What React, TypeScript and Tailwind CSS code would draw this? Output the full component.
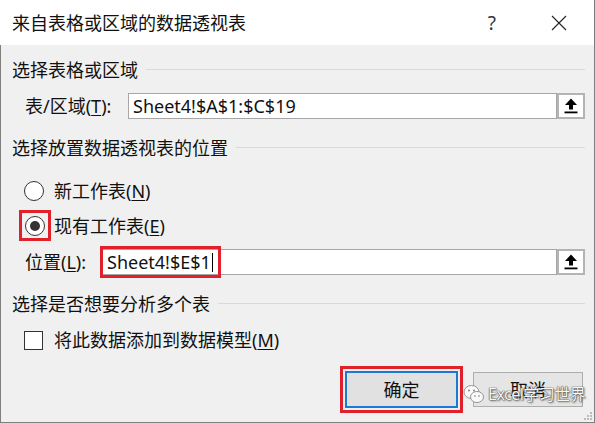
import React from "react";

const font = { fontFamily: '"Noto Sans", "Noto Sans CJK SC", sans-serif' };

function UploadBtn() {
  return (
    <div className="w-[28px] h-[26px] border-2 border-[#b4b4b4] bg-white flex items-center justify-center shrink-0">
      <svg width="16" height="18" viewBox="0 0 16 18">
        <path d="M8 1.5 L14 8 L10 8 L10 12.5 L6 12.5 L6 8 L2 8 Z" fill="#000" />
        <rect x="1.5" y="14.5" width="13" height="1.8" fill="#000" />
      </svg>
    </div>
  );
}

function SectionHeader({ text }: { text: string }) {
  return (
    <div className="flex items-center h-[24px]">
      <span className="text-[18px] leading-[24px] text-[#111] whitespace-nowrap">{text}</span>
      <div className="flex-1 h-px bg-[#d9d9d9] ml-[8px] mt-[-2px]" />
    </div>
  );
}

function Radio({ checked }: { checked?: boolean }) {
  return (
    <div className="w-[20px] h-[20px] rounded-full border border-[#333] bg-white flex items-center justify-center shrink-0">
      {checked && <div className="w-[10px] h-[10px] rounded-full bg-[#333]" />}
    </div>
  );
}

export default function App() {
  return (
    <div className="w-[595px] h-[423px] flex flex-col relative overflow-hidden bg-white text-black" style={font}>
      {/* title bar */}
      <div className="h-[45px] bg-white flex items-center pl-[12px] border-r border-[#7a7a7a] shrink-0">
        <span className="text-[18px] leading-[24px] text-[#111]">来自表格或区域的数据透视表</span>
        <div className="flex-1" />
        <span className="text-[19px] leading-[24px] text-[#333] mr-[55px]">?</span>
        <svg width="16" height="16" viewBox="0 0 16 16" className="mr-[27px]">
          <path d="M1 1 L15 15 M15 1 L1 15" stroke="#222" strokeWidth="1.1" />
        </svg>
      </div>

      {/* body */}
      <div className="flex-1 bg-[#f0f0f0] border-l border-r border-b border-[#7f7f7f] pl-[11px] pr-[9px] pt-[13px] flex flex-col">
        <SectionHeader text="选择表格或区域" />

        <div className="flex items-center mt-[11px] h-[26px]">
          <span className="text-[18px] leading-[24px] text-[#111] pl-[13px] w-[116px] shrink-0 whitespace-nowrap">
            表/区域(<span className="underline underline-offset-2">T</span>):
          </span>
          <div className="flex-1 h-[26px] border border-[#a6a6a6] bg-white flex items-center pl-[4px]">
            <span className="text-[18px] leading-[24px] text-[#111]">Sheet4!$A$1:$C$19</span>
          </div>
          <UploadBtn />
        </div>

        <div className="mt-[17px]">
          <SectionHeader text="选择放置数据透视表的位置" />
        </div>

        <div className="flex items-center h-[30px] mt-[16px] pl-[12px]">
          <Radio />
          <span className="text-[18px] leading-[24px] text-[#111] ml-[10px]">
            新工作表(<span className="underline underline-offset-2">N</span>)
          </span>
        </div>

        <div className="flex items-center h-[31px] mt-[4px] pl-[7px]">
          <div className="w-[32px] h-[31px] border-[3px] border-[#e0202a] flex items-center justify-center shrink-0">
            <Radio checked />
          </div>
          <span className="text-[18px] leading-[24px] text-[#111] ml-[3px]">
            现有工作表(<span className="underline underline-offset-2">E</span>)
          </span>
        </div>

        <div className="flex items-center mt-[8px] h-[26px]">
          <span className="text-[18px] leading-[24px] text-[#111] pl-[13px] w-[90px] shrink-0 whitespace-nowrap">
            位置(<span className="underline underline-offset-2">L</span>):
          </span>
          <div className="flex-1 h-[26px] border border-[#a6a6a6] bg-white flex items-center pl-[4px] relative">
            <span className="text-[18px] leading-[24px] text-[#111]">Sheet4!$E$1</span>
            <div className="w-[1.5px] h-[19px] bg-black ml-[1px]" />
            <div className="absolute left-[-3px] top-[-4px] w-[121px] h-[32px] border-[3px] border-[#e0202a]" />
          </div>
          <UploadBtn />
        </div>

        <div className="mt-[17px]">
          <SectionHeader text="选择是否想要分析多个表" />
        </div>

        <div className="flex items-center h-[24px] mt-[12px] pl-[12px]">
          <div className="w-[19px] h-[19px] border border-[#333] bg-white shrink-0" />
          <span className="text-[18px] leading-[24px] text-[#111] ml-[11px]">
            将此数据添加到数据模型(<span className="underline underline-offset-2">M</span>)
          </span>
        </div>

        <div className="flex items-center justify-end mt-[14px] pr-[2px]">
          <div className="border-[3px] border-[#e0202a] p-[2px]">
            <div className="w-[113px] h-[37px] border-2 border-[#1a7bd0] bg-[#e1e1e1] flex items-center justify-center">
              <span className="text-[18px] leading-[24px] text-[#111]">确定</span>
            </div>
          </div>
          <div className="ml-[10px] w-[110px] h-[35px] border border-[#adadad] bg-[#e5e5e5] flex items-center justify-center">
            <span className="text-[18px] leading-[24px] text-[#111]">取消</span>
          </div>
        </div>
      </div>

      {/* watermark overlay */}
      <div className="absolute left-[463px] top-[384px] flex items-center pointer-events-none">
        <svg width="22" height="20" viewBox="0 0 22 20">
          <ellipse cx="8.5" cy="8" rx="7.5" ry="6.5" fill="#fafafa" stroke="#8a8a8a" strokeWidth="0.9" />
          <ellipse cx="14" cy="13" rx="6.5" ry="5.5" fill="#fafafa" stroke="#8a8a8a" strokeWidth="0.9" />
          <circle cx="6" cy="6.5" r="0.9" fill="#777" />
          <circle cx="11" cy="6.5" r="0.9" fill="#777" />
          <circle cx="12" cy="12" r="0.8" fill="#777" />
          <circle cx="16" cy="12" r="0.8" fill="#777" />
        </svg>
        <span
          className="ml-[3px] text-[16px] leading-[20px] text-[#f6f6f6] tracking-[-0.5px]"
          style={{ textShadow: "0 0 1px #333, 0 0 1px #444, 1px 1px 2px #666" }}
        >
          Excel学习世界
        </span>
      </div>

      {/* resize grip */}
      <div className="absolute right-[3px] bottom-[3px] grid grid-cols-3 gap-[1px] pointer-events-none">
        <div className="w-[2px] h-[2px]" />
        <div className="w-[2px] h-[2px]" />
        <div className="w-[2px] h-[2px] bg-[#bbb]" />
        <div className="w-[2px] h-[2px]" />
        <div className="w-[2px] h-[2px] bg-[#bbb]" />
        <div className="w-[2px] h-[2px] bg-[#bbb]" />
        <div className="w-[2px] h-[2px] bg-[#bbb]" />
        <div className="w-[2px] h-[2px] bg-[#bbb]" />
        <div className="w-[2px] h-[2px] bg-[#bbb]" />
      </div>
    </div>
  );
}
